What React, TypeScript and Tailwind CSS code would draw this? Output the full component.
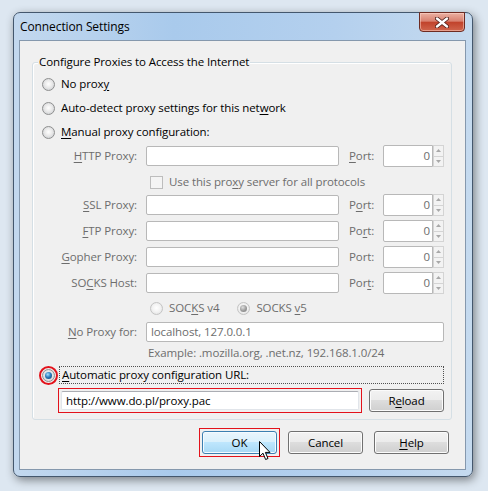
import React from 'react'

const grey = 'text-[#6d6d6d]'

function Radio({ checked = false, disabled = false }: { checked?: boolean; disabled?: boolean }) {
  return (
    <span
      className={`inline-flex h-[13px] w-[13px] shrink-0 items-center justify-center rounded-full border ${
        disabled
          ? 'border-[#c4c4c4] bg-[radial-gradient(circle_at_50%_45%,#ffffff_0%,#f2f2f2_50%,#dcdcdc_100%)]'
          : 'border-[#8e8f8f] bg-[radial-gradient(circle_at_50%_45%,#ffffff_0%,#e9e9e9_45%,#c3c6cb_100%)]'
      }`}
    >
      {checked && (
        <span
          className={`h-[7px] w-[7px] rounded-full ${
            disabled
              ? 'bg-[radial-gradient(circle_at_40%_35%,#e0e0e0_0%,#9a9a9a_55%,#7c7c7c_100%)]'
              : 'bg-[radial-gradient(circle_at_40%_35%,#a6e2ff_0%,#2a7fbf_45%,#0c3a66_100%)]'
          }`}
        />
      )}
    </span>
  )
}

function TextBox({ w, value, disabled = true }: { w: string; value?: string; disabled?: boolean }) {
  return (
    <div
      className={`${w} flex h-[20px] items-center rounded-[2px] border bg-white pl-[4px] ${
        disabled ? 'border-[#b8b8b8] text-[#6d6d6d]' : 'border-[#abadb3] text-black'
      }`}
    >
      {value}
    </div>
  )
}

function Spinner() {
  return (
    <div className="flex h-[22px] w-[61px]">
      <div className="flex flex-1 items-center justify-end rounded-l-[2px] border border-[#b8b8b8] bg-white pr-[2px] text-[#6d6d6d]">
        0
      </div>
      <div className="flex w-[11px] flex-col">
        <div className="flex flex-1 items-center justify-center border border-[#d4d4d4] bg-[#f3f3f3]">
          <svg width="5" height="3" viewBox="0 0 5 3">
            <path d="M0 3 L2.5 0 L5 3 Z" fill="#a8a8a8" />
          </svg>
        </div>
        <div className="flex flex-1 items-center justify-center border border-t-0 border-[#d4d4d4] bg-[#f3f3f3]">
          <svg width="5" height="3" viewBox="0 0 5 3">
            <path d="M0 0 L2.5 3 L5 0 Z" fill="#a8a8a8" />
          </svg>
        </div>
      </div>
    </div>
  )
}

function ProxyRow({ label, port }: { label: React.ReactNode; port: React.ReactNode }) {
  return (
    <div className={`flex h-[22px] items-center ${grey}`}>
      <div className="ml-[20px] w-[84px] text-right">{label}</div>
      <div className="ml-[9px]">
        <TextBox w="w-[193px]" />
      </div>
      <div className="ml-[10px] w-[34px]">{port}</div>
      <Spinner />
    </div>
  )
}

function Btn({ children, hot = false }: { children: React.ReactNode; hot?: boolean }) {
  return (
    <button
      className={`flex h-[23px] w-[75px] items-center justify-center rounded-[3px] border text-black ${
        hot
          ? 'border-[#3c7fb1] bg-[linear-gradient(to_bottom,#eaf6fd_0%,#d9f0fc_50%,#bee6fd_50%,#a7d9f5_100%)] shadow-[inset_0_0_0_1px_#f4fbff]'
          : 'border-[#707070] bg-[linear-gradient(to_bottom,#f2f2f2_0%,#ebebeb_50%,#dddddd_50%,#cfcfcf_100%)] shadow-[inset_0_0_0_1px_#fbfbfb]'
      }`}
    >
      {children}
    </button>
  )
}

export default function App() {
  return (
    <div className="h-[491px] w-[488px] overflow-hidden bg-[#dde7f1] pl-[13px] pt-[12px] font-['Open_Sans',sans-serif] text-[11.5px] leading-[16px] tracking-[-0.1px]">
      <div className="relative h-[465px] w-[460px] rounded-[7px] border border-[#44576d] bg-[linear-gradient(to_right,#c3d8ee_0%,#a9caec_35%,#b4d0ee_70%,#c5daef_100%)] shadow-[2px_3px_10px_rgba(0,0,0,0.45)]">
        {/* title */}
        <div className="flex h-[27px] items-center pl-[6px] text-[12px] text-black">Connection Settings</div>
        <div className="absolute right-[7px] top-[-1px] flex h-[20px] w-[46px] items-center justify-center rounded-b-[4px] border border-[#6e2b22] bg-[linear-gradient(to_bottom,#ebb0a2_0%,#d98170_45%,#c1432c_52%,#d0654d_100%)] shadow-[inset_0_0_0_1px_rgba(255,220,210,0.5)]">
          <svg width="14" height="11" viewBox="0 0 14 11">
            <path d="M2 1.5 L12 9.5 M12 1.5 L2 9.5" stroke="#4a1a14" strokeWidth="4" strokeLinecap="round" />
            <path d="M2 1.5 L12 9.5 M12 1.5 L2 9.5" stroke="#ffffff" strokeWidth="2.4" strokeLinecap="round" />
          </svg>
        </div>

        {/* client */}
        <div className="relative ml-[5px] h-[430px] w-[447px] border border-[#8598ad] bg-[#f0f0f0]">
          <div className="relative ml-[12px] mt-[21px] h-[358px] w-[420px] rounded-[3px] border border-[#d5dfe5] shadow-[inset_1px_1px_0_#ffffff]">
            <span className="absolute left-[5px] top-[-9px] bg-[#f0f0f0] px-[1px] text-black">
              Configure Proxies to Access the Internet
            </span>

            <div className="pt-[9px]">
              <div className="flex h-[24px] items-center gap-[6px] pl-[9px]">
                <Radio />
                <span>
                  No prox<u className="underline-offset-2">y</u>
                </span>
              </div>
              <div className="flex h-[24px] items-center gap-[6px] pl-[9px]">
                <Radio />
                <span>
                  Auto-detect proxy settings for this net<u className="underline-offset-2">w</u>ork
                </span>
              </div>
              <div className="flex h-[24px] items-center gap-[6px] pl-[9px]">
                <Radio />
                <span>
                  <u className="underline-offset-2">M</u>anual proxy configuration:
                </span>
              </div>

              <div className="mt-[1px]">
                <ProxyRow
                  label={<><u className="underline-offset-2">H</u>TTP Proxy:</>}
                  port={<><u className="underline-offset-2">P</u>ort:</>}
                />
              </div>

              <div className={`mt-[5px] flex h-[20px] items-center gap-[6px] pl-[117px] ${grey}`}>
                <span className="h-[13px] w-[13px] shrink-0 border border-[#bdbdbd] bg-[#f4f4f4]" />
                <span>
                  Use this pro<u className="underline-offset-2">x</u>y server for all protocols
                </span>
              </div>

              <div className="mt-[2px]">
                <ProxyRow
                  label={<><u className="underline-offset-2">S</u>SL Proxy:</>}
                  port={<>P<u className="underline-offset-2">o</u>rt:</>}
                />
              </div>
              <div className="mt-[4px]">
                <ProxyRow
                  label={<><u className="underline-offset-2">F</u>TP Proxy:</>}
                  port={<>Po<u className="underline-offset-2">r</u>t:</>}
                />
              </div>
              <div className="mt-[4px]">
                <ProxyRow label={<><u className="underline-offset-2">G</u>opher Proxy:</>} port="Port:" />
              </div>
              <div className="mt-[4px]">
                <ProxyRow
                  label={<>SO<u className="underline-offset-2">C</u>KS Host:</>}
                  port={<>Por<u className="underline-offset-2">t</u>:</>}
                />
              </div>

              <div className={`mt-[4px] flex h-[20px] items-center pl-[117px] ${grey}`}>
                <Radio disabled />
                <span className="ml-[6px]">
                  SOC<u className="underline-offset-2">K</u>S v4
                </span>
                <span className="ml-[18px]">
                  <Radio disabled checked />
                </span>
                <span className="ml-[6px]">
                  SOCKS <u className="underline-offset-2">v</u>5
                </span>
              </div>

              <div className={`mt-[4px] flex h-[20px] items-center ${grey}`}>
                <div className="ml-[20px] w-[84px] text-right">
                  <u className="underline-offset-2">N</u>o Proxy for:
                </div>
                <div className="ml-[9px]">
                  <TextBox w="w-[298px]" value="localhost, 127.0.0.1" />
                </div>
              </div>

              <div className={`mt-[2px] flex h-[18px] items-center pl-[115px] ${grey}`}>
                Example: .mozilla.org, .net.nz, 192.168.1.0/24
              </div>

              <div className="mt-[4px] flex h-[18px] items-center pl-[9px]">
                <span className="relative flex">
                  <Radio checked />
                  <span className="absolute -inset-[3px] rounded-full border-2 border-[#e3121b]" />
                </span>
                <div className="ml-[4px] flex h-[18px] w-[385px] items-center border border-dotted border-[#505050] pl-[2px] text-black">
                  <u className="underline-offset-2">A</u>utomatic proxy configuration URL:
                </div>
              </div>

              <div className="mt-[4px] flex items-center">
                <div className="ml-[25px] flex h-[25px] w-[304px] items-center border border-[#e3121b] p-[2px]">
                  <div className="flex h-full w-full items-center rounded-[2px] border border-[#e1e5ea] border-t-[#abadb3] bg-white pl-[4px] text-black">
                    http://www.do.pl/proxy.pac
                  </div>
                </div>
                <div className="ml-[7px]">
                  <Btn>
                    R<u className="underline-offset-2">e</u>load
                  </Btn>
                </div>
              </div>
            </div>
          </div>

          <div className="mt-[11px] flex justify-end gap-[11px] pr-[16px]">
            <div className="-m-[3px] border border-[#e3121b] p-[2px]">
              <Btn hot>OK</Btn>
            </div>
            <Btn>Cancel</Btn>
            <Btn>
              <u className="underline-offset-2">H</u>elp
            </Btn>
          </div>

          {/* mouse pointer */}
          <svg className="absolute left-[239px] top-[400px]" width="13" height="20" viewBox="0 0 13 20">
            <path
              d="M0.5 0.5 L0.5 15.5 L4 12.2 L6.6 18.5 L9 17.5 L6.4 11.4 L11 11.4 Z"
              fill="#ffffff"
              stroke="#000000"
              strokeWidth="1"
              strokeLinejoin="miter"
            />
          </svg>
        </div>
      </div>
    </div>
  )
}
